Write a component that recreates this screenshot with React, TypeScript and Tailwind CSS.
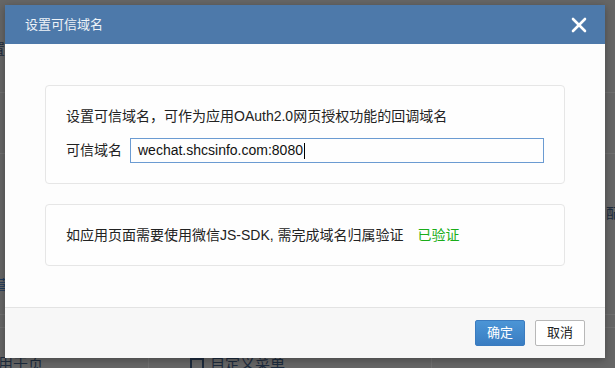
import { X } from 'lucide-react';

const FONT = "font-['Liberation_Sans','Noto_Sans_CJK_SC',sans-serif]";

function Backdrop() {
  return (
    <div className="absolute inset-0 bg-[#666666]">
      <div className="absolute left-0 top-[92px] h-px w-full bg-[#707070]" />
      <div className="absolute left-0 top-[153px] h-px w-full bg-[#707070]" />
      <div className="absolute left-0 top-[314px] h-px w-full bg-[#707070]" />
      <div className="absolute left-0 top-[327px] h-px w-full bg-[#707070]" />
      <div className="absolute left-[148px] top-[327px] h-[41px] w-px bg-[#707070]" />
      <div className="absolute left-[431px] top-[327px] h-[41px] w-px bg-[#707070]" />
      <span className="absolute left-[-9px] top-[41px] text-[14px] leading-[16px] text-[#1d2b3d]">置</span>
      <span className="absolute left-[-6px] top-[280px] text-[14px] leading-[10px] text-[#1d3a5c]">营</span>
      <span className="absolute left-[606px] top-[205px] text-[14px] leading-[16px] text-[#1d2b3d]">配</span>
      <span className="absolute left-[-2px] top-[356px] text-[15px] leading-[16px] text-[#1d2b3d]">用于页</span>
      <span className="absolute left-[190px] top-[356px] flex items-center gap-[6px] text-[15px] leading-[16px] text-[#1d2b3d]">
        <span className="h-[12px] w-[14px] border-2 border-[#1d2b3d]" />
        自定义菜单
      </span>
    </div>
  );
}

export default function App() {
  return (
    <div className={`relative h-[368px] w-[615px] overflow-hidden ${FONT}`}>
      <Backdrop />

      <div className="absolute left-[5px] top-[5px] flex w-[600px] flex-col bg-[#fdfdfd] shadow-[0_2px_8px_rgba(0,0,0,0.3)]">
        <div className="flex h-[39px] items-center justify-between bg-[#4d79aa] pl-[20px] pr-[14px]">
          <span className="text-[13px] text-[#eef3f8]">设置可信域名</span>
          <X className="h-[24px] w-[24px] text-white" strokeWidth={2.6} />
        </div>

        <div className="flex flex-col gap-[20px] px-[40px] pb-[41px] pt-[41px] text-[14px] text-[#222]">
          <div className="flex flex-col gap-[12px] rounded-[4px] border border-[#e6e6e6] bg-[#fefefe] px-[20px] pb-[20px] pt-[20px]">
            <p className="leading-[20px]">设置可信域名，可作为应用OAuth2.0网页授权功能的回调域名</p>
            <div className="flex items-center gap-[8px]">
              <span className="w-[56px] shrink-0">可信域名</span>
              <div className="flex h-[25px] w-[414px] items-center border border-[#6b9bd2] px-[7px] text-[14px] text-[#111]">
                wechat.shcsinfo.com:8080
                <span className="ml-px h-[16px] w-px bg-black" />
              </div>
            </div>
          </div>

          <div className="rounded-[4px] border border-[#e6e6e6] bg-[#fefefe] px-[20px] py-[20px]">
            <p className="leading-[20px]">
              如应用页面需要使用微信JS-SDK, 需完成域名归属验证
              <span className="ml-[14px] text-[#1aad19]">已验证</span>
            </p>
          </div>
        </div>

        <div className="flex justify-end gap-[10px] border-t border-[#e3e3e3] bg-[#f7f7f7] px-[20px] py-[12px] text-[13px]">
          <button className="h-[26px] w-[50px] rounded-[2px] border border-[#3a7bbf] bg-gradient-to-b from-[#4b95d6] to-[#3a7dc2] text-white">
            确定
          </button>
          <button className="h-[26px] w-[50px] rounded-[2px] border border-[#b8b8b8] bg-white text-[#222]">
            取消
          </button>
        </div>
      </div>
    </div>
  );
}
